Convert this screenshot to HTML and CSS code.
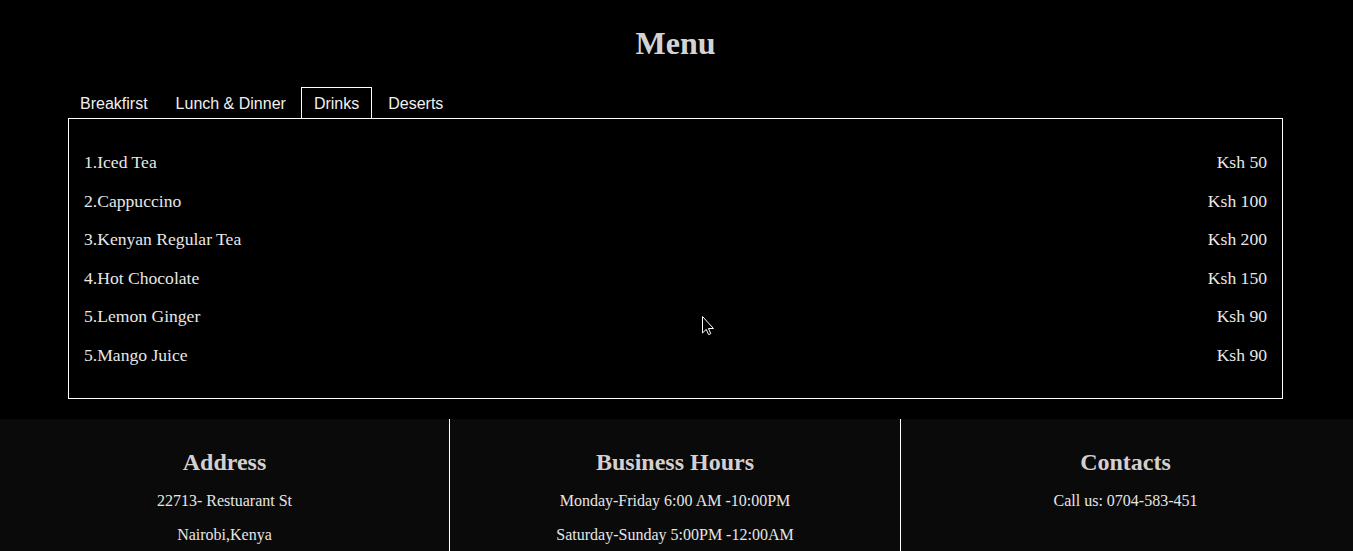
FILE: index.html
```html
<!DOCTYPE html>
<html lang="en">
<head>
<meta charset="utf-8">
<title>Menu</title>
<link rel="stylesheet" href="styles.css">
</head>
<body>
<main class="menu-section">
  <h1 class="menu-title">Menu</h1>
  <nav class="tabs">
    <button class="tab">Breakfirst</button>
    <button class="tab">Lunch &amp; Dinner</button>
    <button class="tab active">Drinks</button>
    <button class="tab">Deserts</button>
  </nav>
  <div class="tab-panel">
    <div class="item"><span>1.Iced Tea</span><span>Ksh 50</span></div>
    <div class="item"><span>2.Cappuccino</span><span>Ksh 100</span></div>
    <div class="item"><span>3.Kenyan Regular Tea</span><span>Ksh 200</span></div>
    <div class="item"><span>4.Hot Chocolate</span><span>Ksh 150</span></div>
    <div class="item"><span>5.Lemon Ginger</span><span>Ksh 90</span></div>
    <div class="item"><span>5.Mango Juice</span><span>Ksh 90</span></div>
  </div>
</main>
<footer class="footer">
  <section class="footer-col">
    <h2>Address</h2>
    <p>22713- Restuarant St</p>
    <p>Nairobi,Kenya</p>
  </section>
  <section class="footer-col">
    <h2>Business Hours</h2>
    <p>Monday-Friday 6:00 AM -10:00PM</p>
    <p>Saturday-Sunday 5:00PM -12:00AM</p>
  </section>
  <section class="footer-col">
    <h2>Contacts</h2>
    <p>Call us: 0704-583-451</p>
  </section>
</footer>
<svg class="cursor" width="14" height="20" viewBox="0 0 14 20" aria-hidden="true">
  <path d="M0.5 0.5 L0.5 17 L4.2 13.4 L6.6 18.6 L8.8 17.6 L6.4 12.5 L11.5 12.5 Z" fill="#000" stroke="#fff" stroke-width="1"/>
</svg>
</body>
</html>
```

FILE: styles.css
```css
* { box-sizing: border-box; }

html, body {
  margin: 0;
  padding: 0;
  background: #000;
}

body {
  font-family: "Liberation Serif", "Times New Roman", serif;
  color: #e6e6e6;
  height: 551px;
  overflow: hidden;
  position: relative;
}

.menu-section {
  width: 1215px;
  margin-left: 68px;
  padding-top: 25px;
}

.menu-title {
  margin: 0;
  text-align: center;
  font-size: 32px;
  line-height: 37px;
  font-weight: bold;
  color: #d3d3d3;
}

.tabs {
  display: flex;
  margin-top: 25px;
  margin-left: -1px;
}

.tab {
  font-family: "Liberation Sans", Arial, sans-serif;
  font-size: 16px;
  color: #f0f0f0;
  background: transparent;
  border: 1px solid transparent;
  border-bottom: none;
  padding: 0 12px;
  margin: 0 2px 0 0;
  height: 31px;
  line-height: 27px;
  cursor: pointer;
}

.tab.active {
  border-color: #fff;
  margin-right: 3px;
}

.tab-panel {
  border: 1px solid #fff;
  padding: 33px 15px 33px;
  display: flex;
  flex-direction: column;
  gap: 18.6px;
}

.item {
  display: flex;
  justify-content: space-between;
  font-size: 17.6px;
  line-height: 20px;
  color: #e8e8e8;
}

.footer {
  margin-top: 20px;
  background: #0a0a0a;
  display: flex;
  height: 132px;
}

.footer-col {
  flex: 0 0 450px;
  text-align: center;
  padding-top: 29px;
  border-right: 1px solid #fff;
}

.footer-col:nth-child(2) {
  flex-basis: 451px;
}

.footer-col:last-child {
  border-right: none;
  flex: 1;
  padding-right: 3px;
}

.footer-col h2 {
  margin: 0 0 16px;
  font-size: 24px;
  line-height: 28px;
  color: #d6cfcf;
}

.footer-col p {
  margin: 0 0 15.6px;
  font-size: 16px;
  line-height: 18.4px;
  color: #e6e6e6;
}

.cursor {
  position: absolute;
  left: 702px;
  top: 316px;
}
```
